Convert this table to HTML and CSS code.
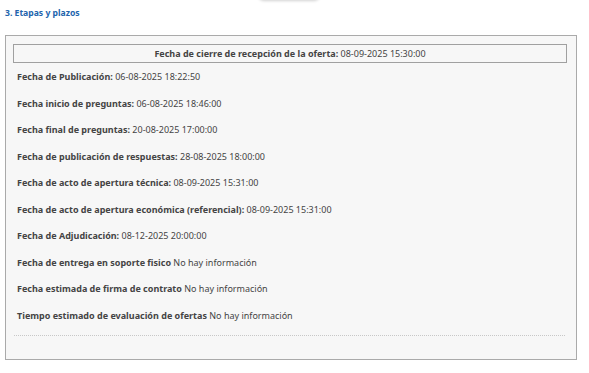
FILE: index.html
```html
<!DOCTYPE html>
<html lang="es">
<head>
<meta charset="utf-8">
<link rel="stylesheet" href="styles.css">
</head>
<body>
<div class="shadow-tab"></div>
<h3 class="section-title">3. Etapas y plazos</h3>
<div class="box">
  <div class="closing"><b>Fecha de cierre de recepción de la oferta:</b> 08-09-2025 15:30:00</div>
  <div class="rows">
    <div class="row"><b>Fecha de Publicación:</b> 06-08-2025 18:22:50</div>
    <div class="row"><b>Fecha inicio de preguntas:</b> 06-08-2025 18:46:00</div>
    <div class="row"><b>Fecha final de preguntas:</b> 20-08-2025 17:00:00</div>
    <div class="row"><b>Fecha de publicación de respuestas:</b> 28-08-2025 18:00:00</div>
    <div class="row"><b>Fecha de acto de apertura técnica:</b> 08-09-2025 15:31:00</div>
    <div class="row"><b>Fecha de acto de apertura económica (referencial):</b> 08-09-2025 15:31:00</div>
    <div class="row"><b>Fecha de Adjudicación:</b> 08-12-2025 20:00:00</div>
    <div class="row"><b>Fecha de entrega en soporte fisico</b> No hay información</div>
    <div class="row"><b>Fecha estimada de firma de contrato</b> No hay información</div>
    <div class="row"><b>Tiempo estimado de evaluación de ofertas</b> No hay información</div>
  </div>
  <div class="divider"></div>
</div>
</body>
</html>
```
FILE: styles.css
```css
html, body {
  margin: 0;
  padding: 0;
  background: #fff;
}
body {
  position: relative;
  font-family: "Noto Sans", "DejaVu Sans", sans-serif;
  color: #444;
  font-size: 9px;
}
.shadow-tab {
  position: absolute;
  top: -12px;
  left: 258px;
  width: 62px;
  height: 12px;
  border-radius: 0 0 6px 6px;
  background: #fff;
  box-shadow: 0 1px 3px rgba(0,0,0,0.18);
}
.section-title {
  margin: 0;
  padding: 7px 0 0 5px;
  height: 35px;
  box-sizing: border-box;
  font-size: 8.6px;
  line-height: 12px;
  font-weight: bold;
  color: #2364ad;
}
.box {
  margin-left: 5px;
  width: 572px;
  height: 325px;
  box-sizing: border-box;
  border: 1px solid #aaa;
  background: #f7f7f7;
  padding: 8px 0 0 7px;
}
.closing {
  width: 554px;
  height: 19px;
  box-sizing: border-box;
  border: 1px solid #a0a0a0;
  text-align: center;
  line-height: 17px;
}
.closing b, .row b {
  font-weight: bold;
}
.rows {
  margin-top: 1px;
  display: flex;
  flex-direction: column;
}
.row {
  height: 26.55px;
  line-height: 26.55px;
  padding-left: 4px;
  white-space: nowrap;
}
.divider {
  margin: 6px 0 0 1px;
  width: 551px;
  border-top: 1px dotted #c8c8c8;
}
```
